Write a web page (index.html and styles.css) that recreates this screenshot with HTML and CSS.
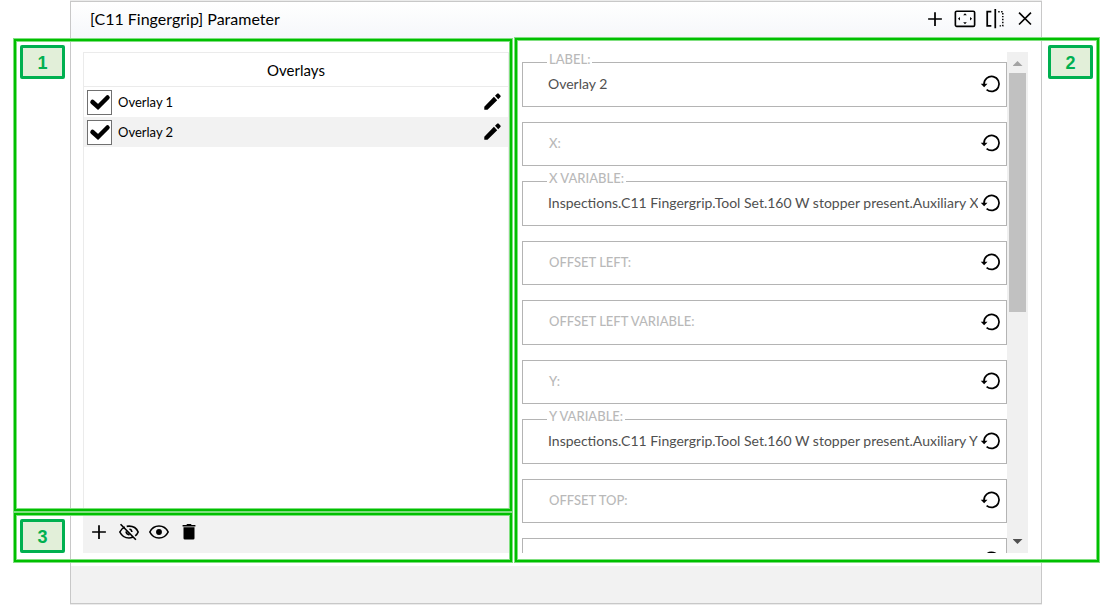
FILE: index.html
```html
<!DOCTYPE html>
<html lang="en">
<head>
<meta charset="utf-8">
<title>[C11 Fingergrip] Parameter</title>
<link rel="stylesheet" href="styles.css">
</head>
<body>
<svg class="defs" aria-hidden="true">
  <symbol id="plus" viewBox="0 0 24 24"><path d="M12 4.500v15M4.500 12h15" fill="none" stroke="#000" stroke-width="1.900"/></symbol>
  <symbol id="pencil" viewBox="0 0 24 24"><path d="M2.500 17.200V20.500H6L16.600 10 13 6.400zM17.700 8.900 20.300 6.300 20.300 5.200 18 2.800 16.700 2.800 14.200 5.300z"/></symbol>
  <symbol id="tick" viewBox="0 0 24 24"><path d="M4.500 12l5.500 5L19.500 7.500" fill="none" stroke="#000" stroke-width="4.500" stroke-linecap="round"/></symbol>
  <symbol id="reset" viewBox="0 0 24 24"><path d="M4.400 11A8.200 8.200 0 1 1 7.200 17" fill="none" stroke="#000" stroke-width="1.900"/><path d="M.8 10.600H8.200L4.500 14.400z"/></symbol>
</svg>
<div class="window">
  <header class="titlebar">
    <h1 class="title">[C11 Fingergrip] Parameter</h1>
    <div class="actions">
      <button class="icon-button" aria-label="Add"><svg class="icon"><use href="#plus"/></svg></button>
      <button class="icon-button" aria-label="Maximize"><svg class="icon" viewBox="0 0 24 24"><rect x="1.500" y="3.500" width="21" height="16.500" rx="1.500" fill="none" stroke="#000" stroke-width="1.800"/><path d="M12 5.700l2 2.200h-4zM12 17.800l2-2.200h-4zM4.300 11.700l2.200-2v4zM19.700 11.700l-2.200-2v4z"/></svg></button>
      <button class="icon-button" aria-label="Split"><svg class="icon" viewBox="0 0 24 24"><path d="M8 4H3.500V19.500H8M12.300 1V22" fill="none" stroke="#000" stroke-width="1.900"/><path d="M15.500 4H20.500V19.500H15.500" fill="none" stroke="#000" stroke-width="1.600" stroke-dasharray="1.600 1.600"/></svg></button>
      <button class="icon-button" aria-label="Close"><svg class="icon" viewBox="0 0 24 24"><path d="M5.500 5l13 13M18.500 5l-13 13" fill="none" stroke="#000" stroke-width="1.800"/></svg></button>
    </div>
  </header>
  <main class="content">
    <div class="left">
      <section class="list">
        <h2 class="list-title">Overlays</h2>
        <div class="row">
          <span class="check"><input class="box" type="checkbox" id="o1" checked><svg class="icon"><use href="#tick"/></svg></span>
          <label class="name" for="o1">Overlay 1</label>
          <button class="icon-button" aria-label="Edit Overlay 1"><svg class="icon"><use href="#pencil"/></svg></button>
        </div>
        <div class="row selected">
          <span class="check"><input class="box" type="checkbox" id="o2" checked><svg class="icon"><use href="#tick"/></svg></span>
          <label class="name" for="o2">Overlay 2</label>
          <button class="icon-button" aria-label="Edit Overlay 2"><svg class="icon"><use href="#pencil"/></svg></button>
        </div>
        <div class="frame frame-list"><span class="badge">1</span></div>
      </section>
      <div class="toolbar">
        <button class="icon-button" aria-label="Add overlay"><svg class="icon"><use href="#plus"/></svg></button>
        <button class="icon-button" aria-label="Hide"><svg class="icon" viewBox="0 0 24 24"><path d="M7.500 6.500Q3.500 8.200 2 12 5.200 18.500 12 18.500 14 18.500 15.900 17.700M9.500 5.800Q18.800 4.500 22 12 21 14.500 18.800 16.200M2.800 3.500L19.500 20.500M12.500 8.800Q15 9.500 15.200 12M8.800 11.500Q9 14.500 12.500 15.200" fill="none" stroke="#000" stroke-width="1.800"/></svg></button>
        <button class="icon-button" aria-label="Show"><svg class="icon" viewBox="0 0 24 24"><path d="M2 12Q5.200 5.500 12 5.500T22 12Q18.800 18.500 12 18.500T2 12z" fill="none" stroke="#000" stroke-width="1.800"/><circle cx="12" cy="12" r="3.200"/></svg></button>
        <button class="icon-button" aria-label="Delete"><svg class="icon" viewBox="0 0 24 24"><path d="M5 4.300H9L10 3.300H14L15 4.300H19V6H5zM6 6.800H18V18.800Q18 20.300 16.500 20.300H7.500Q6 20.300 6 18.800z"/></svg></button>
        <div class="frame frame-toolbar"><span class="badge">3</span></div>
      </div>
    </div>
    <section class="right">
      <form class="fields">
        <div class="field filled"><label class="caption" for="f1">LABEL:</label><input class="value" id="f1" value="Overlay 2"><button type="button" class="icon-button" aria-label="Reset"><svg class="icon"><use href="#reset"/></svg></button></div>
        <div class="field"><label class="caption" for="f2">X:</label><input class="value" id="f2"><button type="button" class="icon-button" aria-label="Reset"><svg class="icon"><use href="#reset"/></svg></button></div>
        <div class="field filled"><label class="caption" for="f3">X VARIABLE:</label><input class="value" id="f3" value="Inspections.C11 Fingergrip.Tool Set.160 W stopper present.Auxiliary X"><button type="button" class="icon-button" aria-label="Reset"><svg class="icon"><use href="#reset"/></svg></button></div>
        <div class="field"><label class="caption" for="f4">OFFSET LEFT:</label><input class="value" id="f4"><button type="button" class="icon-button" aria-label="Reset"><svg class="icon"><use href="#reset"/></svg></button></div>
        <div class="field"><label class="caption" for="f5">OFFSET LEFT VARIABLE:</label><input class="value" id="f5"><button type="button" class="icon-button" aria-label="Reset"><svg class="icon"><use href="#reset"/></svg></button></div>
        <div class="field"><label class="caption" for="f6">Y:</label><input class="value" id="f6"><button type="button" class="icon-button" aria-label="Reset"><svg class="icon"><use href="#reset"/></svg></button></div>
        <div class="field filled"><label class="caption" for="f7">Y VARIABLE:</label><input class="value" id="f7" value="Inspections.C11 Fingergrip.Tool Set.160 W stopper present.Auxiliary Y"><button type="button" class="icon-button" aria-label="Reset"><svg class="icon"><use href="#reset"/></svg></button></div>
        <div class="field"><label class="caption" for="f8">OFFSET TOP:</label><input class="value" id="f8"><button type="button" class="icon-button" aria-label="Reset"><svg class="icon"><use href="#reset"/></svg></button></div>
        <div class="field"><input class="value" aria-label="Next parameter"><button type="button" class="icon-button" aria-label="Reset"><svg class="icon"><use href="#reset"/></svg></button></div>
      </form>
      <div class="scrollbar" aria-hidden="true">
        <span class="arrow up"></span>
        <span class="track"><span class="thumb"></span></span>
        <span class="arrow down"></span>
      </div>
      <div class="frame frame-fields"><span class="badge">2</span></div>
    </section>
  </main>
  <footer class="footer"></footer>
</div>
</body>
</html>
```

FILE: styles.css
```css
* { box-sizing: border-box; }
body {
  margin: 0;
  min-height: 100vh;
  display: flex;
  overflow-x: hidden;
  background: #fff;
  color: #000;
  font: 13px/16px Lato, "Open Sans", sans-serif;
}
.defs { position: absolute; width: 0; height: 0; }
.window {
  flex: 1;
  min-width: 0;
  display: flex;
  flex-direction: column;
  margin: 1px 58px 1px 70px;
  border: 1px solid #c8c8c8;
  box-shadow: 0 -1px #ebebeb, 0 1px #ebebeb;
}
.titlebar {
  height: 38px;
  padding: 0 1px 4px 19px;
  display: flex;
  align-items: center;
  justify-content: space-between;
  background: linear-gradient(#fff, #f5f7fa);
}
.title { margin: 0; font-size: 16px; line-height: 20px; font-weight: 400; }
.actions { display: flex; }
.icon-button {
  flex: none;
  width: 30px;
  height: 30px;
  padding: 0;
  border: 0;
  background: none;
  display: grid;
  place-items: center;
}
.icon { width: 22px; height: 22px; }
.content {
  flex: 1;
  display: grid;
  grid-template-columns: 426fr 506fr;
  gap: 13px;
  padding: 12px 13px 13px 12px;
}
.left { display: flex; flex-direction: column; min-width: 0; }
.list { position: relative; flex: 1; border: 1px solid #ebebeb; border-bottom: 0; }
.list-title {
  margin: 0;
  padding: 7px 0 6px;
  border-bottom: 1px solid #ebebeb;
  font-size: 15px;
  line-height: 20px;
  font-weight: 400;
  text-align: center;
}
.row { height: 30px; display: flex; align-items: center; padding-left: 3px; }
.selected { background: #f2f2f2; }
.check { display: grid; width: 25px; height: 25px; place-items: center; }
.check > * { grid-area: 1 / 1; }
.check .icon { pointer-events: none; width: 24px; height: 24px; }
.box {
  appearance: none;
  width: 25px;
  height: 25px;
  margin: 0;
  border: 1px solid #707070;
  background: #fff;
}
.name { flex: 1; padding-left: 6px; }
.toolbar {
  position: relative;
  height: 38px;
  display: flex;
  padding: 2px 1px;
  background: #f2f2f2;
}
.right { position: relative; display: flex; min-width: 0; }
.fields {
  flex: 1;
  min-width: 0;
  height: 0;
  min-height: 100%;
  overflow: hidden;
  padding-top: 10px;
}
.field {
  position: relative;
  display: flex;
  align-items: center;
  height: 44px;
  margin-bottom: 15px;
  border: 1px solid #b4b4b4;
}
.field:nth-child(odd) { height: 45px; }
.field .icon-button { width: 26px; margin-right: 2px; }
.value {
  flex: 1;
  min-width: 0;
  height: 100%;
  padding: 0 0 2px 25px;
  border: 0;
  outline: 0;
  background: none;
  color: #505050;
  font: inherit;
  font-size: 14px;
}
.caption {
  position: absolute;
  left: 24px;
  top: 12px;
  padding: 0 2px;
  background: #fff;
  color: #b9b9b9;
  font-weight: 500;
}
.filled .caption { top: -12px; }
.scrollbar {
  width: 21px;
  display: flex;
  flex-direction: column;
  align-items: center;
  padding: 9px 0;
  background: #f0f0f0;
}
.arrow { width: 10px; height: 5px; background: #a3a3a3; clip-path: polygon(0 100%, 50% 0, 100% 100%); }
.down { background: #505050; clip-path: polygon(0 0, 100% 0, 50% 100%); }
.track { flex: 1; width: 17px; padding: 7px 0; }
.thumb { display: block; height: 52%; background: #c1c1c1; }
.frame {
  position: absolute;
  z-index: 1;
  pointer-events: none;
  border: 1px solid #80df80;
  box-shadow: inset 0 0 0 2px #00c000, inset 0 0 0 3px #80df80;
}
.frame-list { inset: -15px -5px 3px -71px; }
.frame-toolbar { inset: -3px -4px -10px -70px; }
.frame-fields { inset: -15px -72px -10px -8px; }
.badge {
  position: absolute;
  left: 6px;
  top: 6px;
  width: 45px;
  height: 34px;
  border: 3px solid #00b050;
  border-radius: 2px;
  background: #e2efd9;
  color: #00b050;
  font: 700 18px/30px "Liberation Sans", sans-serif;
  text-align: center;
}
.frame-fields .badge { left: auto; right: 6px; top: 7px; }
.footer { height: 37px; background: #f2f2f2; }
```
